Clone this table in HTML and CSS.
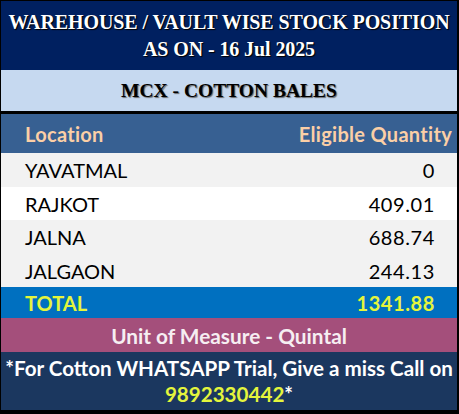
FILE: index.html
```html
<!DOCTYPE html>
<html>
<head>
<meta charset="utf-8">
<link rel="stylesheet" href="styles.css">
</head>
<body>
<div class="sheet">
  <div class="title">
    <div>WAREHOUSE / VAULT WISE STOCK POSITION</div>
    <div>AS ON - 16 Jul 2025</div>
  </div>
  <div class="subtitle">MCX - COTTON BALES</div>
  <div class="head">
    <span>Location</span>
    <span>Eligible Quantity</span>
  </div>
  <div class="row r1"><span>YAVATMAL</span><span class="num">0</span></div>
  <div class="row r2"><span>RAJKOT</span><span class="num">409.01</span></div>
  <div class="row r3"><span>JALNA</span><span class="num">688.74</span></div>
  <div class="row r4"><span>JALGAON</span><span class="num">244.13</span></div>
  <div class="row total"><span>TOTAL</span><span class="num">1341.88</span></div>
  <div class="unit">Unit of Measure - Quintal</div>
  <div class="promo">
    <div>*For Cotton WHATSAPP Trial, Give a miss Call on</div>
    <div><span class="phone">9892330442</span>*</div>
  </div>
</div>
</body>
</html>
```
FILE: styles.css
```css
html, body {
  margin: 0;
  padding: 0;
  background: #000;
}
.sheet {
  width: 456px;
  border-left: 1px solid #000;
  border-right: 2px solid #000;
  border-top: 1px solid #000;
  border-bottom: 4px solid #000;
  background: #000;
  font-family: Lato, "Liberation Sans", sans-serif;
}
.title {
  height: 69px;
  background: #002060;
  color: #fff;
  font-family: "Liberation Serif", serif;
  font-weight: bold;
  font-size: 20px;
  line-height: 27px;
  text-align: center;
  display: flex;
  flex-direction: column;
  justify-content: center;
  text-shadow: 1px 1px 1px #000;
  letter-spacing: -0.1px;
}
.subtitle {
  height: 41px;
  background: #c6d9f0;
  color: #000;
  font-family: "Liberation Serif", serif;
  font-weight: bold;
  font-size: 19.5px;
  display: flex;
  align-items: center;
  justify-content: center;
  text-shadow: 1px 1px 1px #666;
  margin-bottom: 3px;
}
.head {
  height: 39px;
  background: #376092;
  color: #fbcfa6;
  font-weight: bold;
  font-size: 20px;
  letter-spacing: 0.3px;
  display: flex;
  align-items: center;
  justify-content: space-between;
  padding: 0 5px 0 24px;
}
.row {
  display: flex;
  align-items: center;
  justify-content: space-between;
  padding: 0 22px 0 24px;
  font-size: 20px;
  color: #000;
  background: #f2f2f2;
}
.num {
  letter-spacing: 0.6px;
}
.r1 { height: 34px; }
.r2 { height: 33px; background: #fff; }
.r3 { height: 34px; }
.r4 { height: 33px; }
.row.total {
  height: 31px;
  background: #0070c0;
  color: #e4f53c;
  font-weight: bold;
}
.unit {
  height: 34px;
  background: #a44f7b;
  color: #f6eef2;
  font-weight: bold;
  font-size: 20.8px;
  display: flex;
  align-items: center;
  justify-content: center;
}
.promo {
  height: 58px;
  background: #1b375f;
  color: #fff;
  font-weight: bold;
  font-size: 20.6px;
  line-height: 26px;
  text-align: center;
  display: flex;
  flex-direction: column;
  justify-content: center;
}
.phone {
  color: #e4f53c;
}
```
